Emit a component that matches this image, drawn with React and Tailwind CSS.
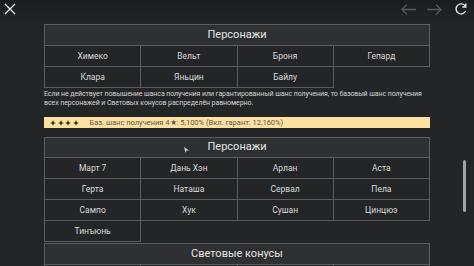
const firstRows = [
    ["Химеко", "Вельт", "Броня", "Гепард"],
    ["Клара", "Яньцин", "Байлу"],
];

const secondRows = [
    ["Март 7", "Дань Хэн", "Арлан", "Аста"],
    ["Герта", "Наташа", "Сервал", "Пела"],
    ["Сампо", "Хук", "Сушан", "Цинцюэ"],
    ["Тинъюнь"],
];

function Star() {
    return (
        <svg width="6" height="6" viewBox="0 0 6 6">
            <path d="M3 0 L3.8 2.2 L6 3 L3.8 3.8 L3 6 L2.2 3.8 L0 3 L2.2 2.2 Z" fill="#2a2418" />
        </svg>
    );
}

function PoolTable({ title, rows, rowH = "h-[21px]", headH = "h-[21px]", cursor }) {
    return (
        <table className="w-[386px] table-fixed border-collapse">
            <colgroup>
                <col className="w-1/4" />
                <col className="w-1/4" />
                <col className="w-1/4" />
                <col className="w-1/4" />
            </colgroup>
            <thead>
                <tr>
                    <th
                        colSpan={4}
                        className={`${headH} relative border border-[#5c5d5e] bg-[#2f3031] p-0 text-[11px] font-normal text-[#e6e6e6]`}
                    >
                        {cursor && (
                            <svg className="absolute left-[139px] top-[9px]" width="5" height="6" viewBox="0 0 5 6">
                                <path d="M0 0 L5 3.5 L2.5 3.5 L1.5 6 Z" fill="#d0d0d0" />
                            </svg>
                        )}
                        {title}
                    </th>
                </tr>
            </thead>
            <tbody>
                {rows.map((row, i) => (
                    <tr key={i}>
                        {row.map((name) => (
                            <td
                                key={name}
                                className={`${rowH} border border-[#5c5d5e] p-0 text-center text-[8.5px] text-[#d9d9d9]`}
                            >
                                {name}
                            </td>
                        ))}
                    </tr>
                ))}
            </tbody>
        </table>
    );
}

export default function App() {
    return (
        <div
            className="relative flex h-[266px] w-[474px] flex-col overflow-hidden bg-[#242526]"
            style={{ fontFamily: "Roboto, 'Liberation Sans', sans-serif" }}
        >
            {/* --- Top bar --- */}
            <div className="flex h-[24px] shrink-0 items-start justify-between bg-gradient-to-b from-[#1b1c1e] to-[#242526] px-[4px] pt-[3px]">
                <svg width="12" height="12" viewBox="0 0 12 12">
                    <path d="M1 1 L11 11 M11 1 L1 11" stroke="#f0f0f0" strokeWidth="1.3" />
                </svg>
                <div className="flex items-center gap-[11px] pr-[3px]">
                    <svg width="15" height="11" viewBox="0 0 15 11">
                        <path d="M6 0.5 L1 5.5 L6 10.5 M1 5.5 H15" stroke="#55585a" strokeWidth="1.3" fill="none" />
                    </svg>
                    <svg width="15" height="11" viewBox="0 0 15 11">
                        <path d="M9 0.5 L14 5.5 L9 10.5 M14 5.5 H0" stroke="#55585a" strokeWidth="1.3" fill="none" />
                    </svg>
                    <svg width="12" height="12" viewBox="0 0 12 12" className="ml-[2px]">
                        <path d="M10.3 3.2 A5 5 0 1 0 10.6 8" stroke="#e8e8e8" strokeWidth="1.4" fill="none" />
                        <path d="M10.8 0.5 V4 H7.3" stroke="#e8e8e8" strokeWidth="1.4" fill="none" />
                    </svg>
                </div>
            </div>

            {/* --- Content --- */}
            <div className="flex flex-col pl-[44px]">
                <PoolTable title="Персонажи" rows={firstRows} />

                <p className="mt-[2px] w-[386px] text-[7px] leading-[9px] tracking-[-0.08px] text-[#d4d4d4]">
                    Если не действует повышение шанса получения или гарантированный шанс получения, то базовый шанс получения всех персонажей и Световых конусов распределён равномерно.
                </p>

                <div className="mt-[9px] flex h-[11px] w-[386px] items-center bg-[#fde1a3] pl-[6px] text-[7.5px] text-[#5e5748]">
                    <span className="flex gap-[1.5px]">
                        <Star />
                        <Star />
                        <Star />
                        <Star />
                    </span>
                    <span className="ml-[11px]">Баз. шанс получения 4★: 5,100% (Вкл. гарант: 12,160%)</span>
                </div>

                <div className="mt-[9px]">
                    <PoolTable title="Персонажи" rows={secondRows} headH="h-[20px]" cursor />
                </div>

                <div className="mt-[1px]">
                    <PoolTable title="Световые конусы" rows={[["", "", "", ""]]} />
                </div>
            </div>

            {/* --- Scrollbar --- */}
            <div className="absolute left-[463px] top-[160px] h-[52px] w-[3px] rounded-full bg-[#a3a3a3]" />
        </div>
    );
}
